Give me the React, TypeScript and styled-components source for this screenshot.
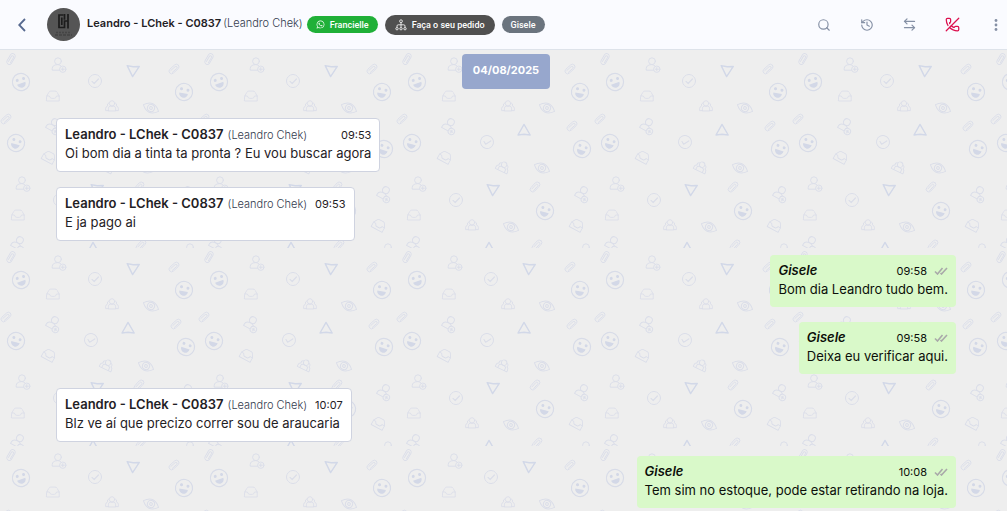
import React from "react";
import styled, { createGlobalStyle, css } from "styled-components";
import { ArrowLeftRight, History, PhoneOff, Search } from "lucide-react";
import { FaWhatsapp } from "react-icons/fa";

const GlobalStyle = createGlobalStyle`
  *, *::before, *::after { box-sizing: border-box; }
  body {
    margin: 0;
    font-family: Inter, "Liberation Sans", sans-serif;
    color: #1f2125;
    background: #eeeeee;
  }
`;

const Page = styled.div`
  display: flex;
  flex-direction: column;
  min-height: 100vh;
`;

const Header = styled.header`
  display: flex;
  align-items: center;
  height: 50px;
  padding: 0 4px 0 14px;
  background: #fafbff;
  border-bottom: 1px solid #dee3ea;
`;

const IconButton = styled.button<{ $color?: string }>`
  display: flex;
  align-items: center;
  justify-content: center;
  width: 15px;
  height: 24px;
  padding: 0;
  border: 0;
  background: none;
  color: ${(p) => p.$color ?? "#8590a5"};
  cursor: pointer;
`;

const Avatar = styled.svg`
  width: 33px;
  height: 33px;
  margin: 0 7px 0 18px;
  flex: none;
`;

const Contact = styled.h1`
  display: flex;
  align-items: baseline;
  gap: 2px;
  margin: 0 4px 3px 0;
  font-size: 11px;
  line-height: 16px;
  font-weight: 600;
  white-space: nowrap;
`;

const Alias = styled.span`
  font-size: 11px;
  font-weight: 300;
  color: #333b4e;
`;

const Tags = styled.div`
  display: flex;
  align-items: center;
  gap: 7px;
`;

const Tag = styled.span<{ $bg: string; $tall?: boolean }>`
  display: flex;
  align-items: center;
  gap: 5px;
  height: ${(p) => (p.$tall ? 20 : 17)}px;
  padding: 0 ${(p) => (p.$tall ? 10 : 9)}px;
  border-radius: 10px;
  background: ${(p) => p.$bg};
  color: #ffffff;
  font-family: Roboto, sans-serif;
  font-size: 9px;
  font-weight: 500;
  white-space: nowrap;
`;

const Actions = styled.div`
  display: flex;
  gap: 28px;
  margin-left: auto;
`;

const Chat = styled.main`
  position: relative;
  flex: 1;
  padding: 4px 51px 2px 56px;
`;

const Wallpaper = styled.svg`
  position: absolute;
  inset: 0;
  width: 100%;
  height: 100%;
`;

const Conversation = styled.div`
  position: relative;
  display: flex;
  flex-direction: column;
`;

const DateChip = styled.time`
  align-self: center;
  height: 35px;
  margin-bottom: 29px;
  padding: 0 11px;
  border-radius: 4px;
  background: #97a7cd;
  color: #ffffff;
  font-size: 11px;
  font-weight: 700;
  line-height: 33px;
`;

const Thread = styled.div`
  display: flex;
  flex-direction: column;
  gap: 14px;
`;

const Group = styled.section<{ $mine: boolean }>`
  display: flex;
  flex-direction: column;
  align-items: ${(p) => (p.$mine ? "flex-end" : "flex-start")};
  gap: 15px;
`;

const Bubble = styled.article<{ $mine: boolean }>`
  padding: 6px 8px 8px;
  border-radius: 4px;
  font-size: 13px;
  line-height: 19px;
  ${(p) =>
    p.$mine
      ? css`
          background: #d9f9c9;
          color: #0c0f0a;
        `
      : css`
          background: #ffffff;
          border: 1px solid #cfd3e0;
        `}
`;

const BubbleHead = styled.header`
  display: flex;
  align-items: baseline;
  gap: 4px;
  height: 19px;
`;

const Sender = styled.strong<{ $mine: boolean }>`
  font-weight: 600;
  font-style: ${(p) => (p.$mine ? "italic" : "normal")};
`;

const Stamp = styled.time`
  margin-left: auto;
  padding-left: 4px;
  font-size: 11px;
`;

const Body = styled.p`
  margin: 0;
`;

const Ticks = styled.svg`
  width: 14px;
  height: 8px;
  margin-left: 3px;
`;

type Message = { time: string; text: string };
type MessageGroup = { mine: boolean; messages: Message[] };

const groups: MessageGroup[] = [
  {
    mine: false,
    messages: [
      { time: "09:53", text: "Oi bom dia a tinta ta pronta ? Eu vou buscar agora" },
      { time: "09:53", text: "E ja pago ai" },
    ],
  },
  {
    mine: true,
    messages: [
      { time: "09:58", text: "Bom dia Leandro tudo bem." },
      { time: "09:58", text: "Deixa eu verificar aqui." },
    ],
  },
  {
    mine: false,
    messages: [{ time: "10:07", text: "Blz ve aí que precizo correr sou de araucaria" }],
  },
  {
    mine: true,
    messages: [{ time: "10:08", text: "Tem sim no estoque, pode estar retirando na loja." }],
  },
];

const shapes: Record<string, React.ReactNode> = {
  clip: (
    <g transform="rotate(38)" strokeWidth="0.9">
      <rect x="-2.6" y="-5.8" width="5.2" height="11.6" rx="2.6" />
      <path d="M-1 3.4V-2.4a1.2 1.2 0 0 1 2.4 0V3.6" />
    </g>
  ),
  smile: (
    <g>
      <circle r="8.6" strokeWidth="1.2" stroke="#d8dce8" />
      <g fill="#d3d8e7" stroke="none">
        <circle cx="-3" cy="-2.8" r="1.5" />
        <circle cx="3.6" cy="-2.4" r="1.5" />
        <path d="M-4.6 1.2h8.8a4.4 4.6 0 0 1-8.8 0z" />
      </g>
    </g>
  ),
  user: (
    <g>
      <circle cx="-1" cy="-3.8" r="3.4" />
      <path d="M0.5 5.2h-7.3v-1.6c0-2.4 2-3.9 5-3.9 1.6 0 2.8.2 3.6 1" />
      <circle cx="3.8" cy="4.2" r="3.2" />
      <path d="M2.2 4.2h3.2M3.8 2.6v3.2" />
    </g>
  ),
  check: (
    <g>
      <circle r="6.5" />
      <path d="M-3 .3l2.2 2.2 4.2-4.5" strokeWidth="1.2" />
    </g>
  ),
  inbox: (
    <g strokeWidth="0.9">
      <path d="M-6.2 0l2-3.6q.6-1.3 2-1.3h4.4q1.4 0 2 1.3l2 3.6v5H-6.2z" />
      <path d="M-6.2 0h2.6q.8 2.4 2.3 2.4h2.6q1.5 0 2.3-2.4h2.6" />
    </g>
  ),
  team: (
    <g strokeWidth="0.9">
      <circle cy="-2.6" r="2.7" />
      <path d="M-3.6 4.6v-2.4q0-2 2.2-2h2.8q2.2 0 2.2 2v2.4z" />
      <path d="M-3.2-3.2q-2.2.8-1.2 3.2-2 .5-2 2.8v1.8h2.8M3.2-3.2q2.2.8 1.2 3.2 2 .5 2 2.8v1.8h-2.8" />
    </g>
  ),
  eye: (
    <g transform="rotate(24)">
      <path d="M-8.3 0q8.3-9.4 16.6 0-8.3 9.4-16.6 0z" />
      <circle r="3.6" />
      <circle r="1.4" />
    </g>
  ),
  plane: <path d="M0-5.6L6.2 5 0 4.2-6 5z" strokeWidth="1.4" />,
};

const doodles: [string, number, number, number][] = [
  ["clip", 11, 9, -8],
  ["clip", 174, 19, 10],
  ["clip", 6, 69, 10],
  ["clip", 176, 76, 10],
  ["clip", 139, 137, 4],
  ["clip", 141, 195, 4],
  ["smile", 21, 32, -20],
  ["smile", 184, 42, 10],
  ["smile", 16, 93, 16],
  ["smile", 186, 99, 18],
  ["smile", 149, 161, 16],
  ["user", 59, 15, 0],
  ["user", 23, 134, 0],
  ["user", 54, 76, 28],
  ["user", 187, 144, 28],
  ["user", 19, 194, 28],
  ["check", 95, 31, 0],
  ["check", 91, 92, 14],
  ["check", 60, 150, 0],
  ["inbox", 53, 46, 0],
  ["inbox", 49, 107, 28],
  ["inbox", 18, 165, 0],
  ["inbox", 181, 175, 28],
  ["team", 112, 56, 0],
  ["team", 107, 117, 26],
  ["team", 76, 175, 0],
  ["eye", 151, 58, 0],
  ["eye", 146, 118, 0],
  ["eye", 115, 177, 0],
  ["plane", 133, 21, 184],
  ["plane", 128, 80, 0],
  ["plane", 97, 140, 184],
  ["plane", 93, 198, 0],
  ["user", 191, 201, 0],
];

function ChatWallpaper() {
  return (
    <Wallpaper aria-hidden="true">
      <defs>
        <pattern id="doodles" width="198" height="198" patternUnits="userSpaceOnUse">
          {doodles.map(([name, x, y, turn], i) => (
            <g
              key={i}
              transform={`translate(${x} ${y}) rotate(${turn})`}
              fill="none"
              stroke={name === "plane" ? "#d2d8e8" : "#dbdee9"}
              strokeLinejoin="round"
              strokeLinecap="round"
            >
              {shapes[name]}
            </g>
          ))}
        </pattern>
      </defs>
      <rect width="100%" height="100%" fill="url(#doodles)" />
    </Wallpaper>
  );
}

function OrgIcon() {
  return (
    <svg width="12" height="12" viewBox="0 0 12 12" fill="none" stroke="#fff" strokeWidth="0.8" aria-hidden="true">
      <circle cx="6" cy="2.2" r="1.4" />
      <path d="M6 3.6v4.8M2 8.4v-1.4q0-1.2 1.2-1.2h5.6q1.2 0 1.2 1.2v1.4" />
      <circle cx="2" cy="9.7" r="1.2" />
      <circle cx="6" cy="9.7" r="1.2" />
      <circle cx="10" cy="9.7" r="1.2" />
    </svg>
  );
}

function ContactAvatar() {
  return (
    <Avatar viewBox="0 0 33 33" role="img" aria-label="Leandro - LChek">
      <circle cx="16.5" cy="16.5" r="16.5" fill="#555555" />
      <g fill="none" stroke="#1c1c1c" strokeWidth="1.7">
        <path d="M16.5 7H12v12.5h5.500v-6.500h3.500M14.800 9.500v7.500" />
        <path d="M17.5 6v5h-1M21 6v14.5" />
      </g>
      <path d="M9 24.500h15" stroke="#454545" strokeWidth="1.4" strokeDasharray="2 1" />
      <path d="M8 27h17" stroke="#3a3a3a" strokeWidth="1" strokeDasharray="3 1" />
    </Avatar>
  );
}

export default function App() {
  return (
    <Page>
      <GlobalStyle />
      <Header>
        <IconButton aria-label="Voltar" $color="#56698f">
          <svg width="8" height="14" viewBox="0 0 8 14" fill="none" stroke="currentColor" strokeWidth="1.8">
            <path d="M7 1L1.2 7 7 13" />
          </svg>
        </IconButton>
        <ContactAvatar />
        <Contact>
          Leandro - LChek - C0837 <Alias>(Leandro Chek)</Alias>
        </Contact>
        <Tags>
          <Tag $bg="#20b038">
            <FaWhatsapp size={9} />
            Francielle
          </Tag>
          <Tag $bg="#505050" $tall>
            <OrgIcon />
            Faça o seu pedido
          </Tag>
          <Tag $bg="#6b747e">Gisele</Tag>
        </Tags>
        <Actions>
          <IconButton aria-label="Buscar">
            <Search size={14} />
          </IconButton>
          <IconButton aria-label="Histórico">
            <History size={14} />
          </IconButton>
          <IconButton aria-label="Transferir">
            <ArrowLeftRight size={15} />
          </IconButton>
          <IconButton aria-label="Encerrar atendimento" $color="#dc0f4e">
            <PhoneOff size={15} />
          </IconButton>
          <IconButton aria-label="Mais opções">
            <svg width="4" height="12" viewBox="0 0 4 12" fill="currentColor">
              <circle cx="2" cy="1.5" r="1.4" />
              <circle cx="2" cy="6" r="1.4" />
              <circle cx="2" cy="10.5" r="1.4" />
            </svg>
          </IconButton>
        </Actions>
      </Header>
      <Chat>
        <ChatWallpaper />
        <Conversation>
          <DateChip dateTime="2025-08-04">04/08/2025</DateChip>
          <Thread>
            {groups.map((group, g) => (
              <Group key={g} $mine={group.mine}>
                {group.messages.map((message, m) => (
                  <Bubble key={m} $mine={group.mine}>
                    <BubbleHead>
                      <Sender $mine={group.mine}>
                        {group.mine ? "Gisele" : "Leandro - LChek - C0837"}
                      </Sender>
                      {!group.mine && <Alias>(Leandro Chek)</Alias>}
                      <Stamp>{message.time}</Stamp>
                      {group.mine && (
                        <Ticks viewBox="0 0 14 8" fill="none" stroke="#a9a9a9" strokeWidth="1.6" role="img" aria-label="Entregue">
                          <path d="M1 4.5L3.5 7 8.5 1M6.5 6L7.5 7 13 1" />
                        </Ticks>
                      )}
                    </BubbleHead>
                    <Body>{message.text}</Body>
                  </Bubble>
                ))}
              </Group>
            ))}
          </Thread>
        </Conversation>
      </Chat>
    </Page>
  );
}
